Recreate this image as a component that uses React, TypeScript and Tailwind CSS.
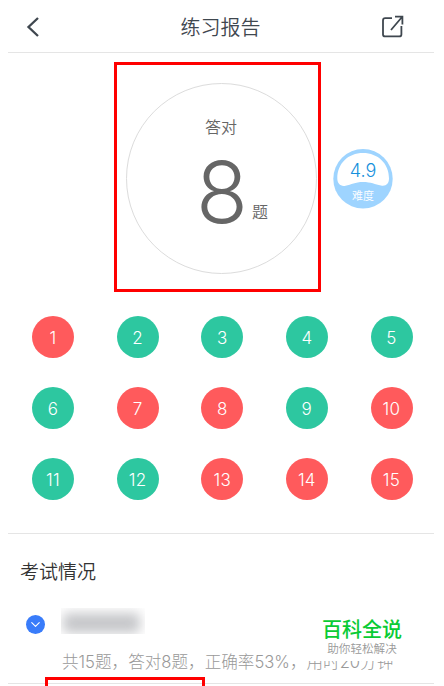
import { ChevronDown } from "lucide-react";
import clsx from "clsx";

const answers = [
  { id: 1, correct: false },
  { id: 2, correct: true },
  { id: 3, correct: true },
  { id: 4, correct: true },
  { id: 5, correct: true },
  { id: 6, correct: true },
  { id: 7, correct: false },
  { id: 8, correct: false },
  { id: 9, correct: true },
  { id: 10, correct: false },
  { id: 11, correct: true },
  { id: 12, correct: true },
  { id: 13, correct: false },
  { id: 14, correct: false },
  { id: 15, correct: false },
];

function Header() {
  return (
    <header className="flex h-[53px] items-center justify-between border-b border-[#e5e5e5] pt-[2px] pr-[30px] pl-[18px] text-[#3f474f]">
      <svg className="h-5 w-[13px]" viewBox="0 0 13 20" fill="none" stroke="currentColor" strokeWidth="2.3">
        <path d="M12 1 2.500 10l9.500 9" />
      </svg>
      <h1 className="ml-[21px] pt-px text-[20px] leading-6 font-[350]">练习报告</h1>
      <svg className="-mt-px h-[23px] w-[23px]" viewBox="0 0 23 23" fill="none" stroke="currentColor" strokeWidth="1.8">
        <path d="M11 3.2H4.2Q2 3.2 2 5.4v14Q2 21.4 4.2 21.4h14q2.2 0 2.2-2V11" />
        <path d="M14 1.6h7.4v8M21 2 10 15" />
      </svg>
    </header>
  );
}

function Difficulty() {
  return (
    <div className="relative mt-[87px] ml-3 h-[60px] w-[60px]">
      <svg className="h-full w-full" viewBox="0 0 60 60">
        <circle cx="30" cy="29.8" r="29.7" fill="#9ed4ff" />
        <path
          d="M4.3 29.5C4.3 14.5 15 4 30 4s26 10.500 26 25.500c0 5-3 8-8 7-6-1.200-10-3.600-18-3.600S18.500 35.500 12.500 36.700c-5 1-8.200-2.200-8.200-7.200Z"
          fill="#fff"
        />
      </svg>
      <div className="absolute inset-0 flex flex-col items-center">
        <span className="mt-[10px] text-[18px] leading-6 font-[350] text-[#1690dc]">4.9</span>
        <span className="mt-[5px] text-[11px] leading-4 font-[350] text-white">难度</span>
      </div>
    </div>
  );
}

function Score() {
  return (
    <section className="flex pt-[9px] pl-[106px]">
      <div className="h-[230px] w-[207px] border-3 border-[#ff0000] pt-[18px] pl-[9px]">
        <div className="flex h-[191px] w-[191px] flex-col items-center rounded-full border border-[#dcdcdc] pt-[31px] text-[#666]">
          <span className="pr-px text-[16px] leading-6 font-[350]">答对</span>
          <div className="mt-[10px] ml-[69px] flex items-end self-start">
            <span className="w-[49px] text-center text-[85px] leading-[88px] font-light">8</span>
            <span className="mb-[13px] ml-[7px] text-[16px] leading-6 font-[350]">题</span>
          </div>
        </div>
      </div>
      <Difficulty />
    </section>
  );
}

function AnswerGrid() {
  return (
    <section className="mt-6 ml-6 grid w-[380.5px] grid-cols-[repeat(5,42px)] justify-between gap-y-[29px]">
      {answers.map((a) => (
        <div
          key={a.id}
          className={clsx(
            "flex h-[42px] w-[42px] items-center justify-center rounded-full pt-[3px] text-[17px] tracking-[0.3px] font-light text-white",
            a.correct ? "bg-[#2dc7a0]" : "bg-[#ff5a5c]"
          )}
        >
          {a.id}
        </div>
      ))}
    </section>
  );
}

function ExamSummary() {
  return (
    <section className="mt-[33px] h-[151px] border-y border-[#e5e5e5] pl-3">
      <h2 className="pt-[27px] text-[19px] leading-6 font-[350] text-[#333]">考试情况</h2>
      <div className="mt-[23px] flex h-[26px] items-center pl-[5px]">
        <span className="mt-[7px] ml-px flex h-[19px] w-[19px] items-center justify-center rounded-full bg-[#397cfa] text-white">
          <ChevronDown className="h-[15px] w-[15px]" strokeWidth={1.8} />
        </span>
        {/* hidden exam name */}
        <div className="ml-4 h-[26px] w-[84px] overflow-hidden">
          <div className="mt-[5px] ml-[2px] h-5 w-[77px] rounded bg-[#c6c7ca] blur-[6px]" />
        </div>
      </div>
      <p className="mt-[16px] ml-[42px] text-[16.600px] leading-6 font-light whitespace-nowrap text-[#999]">
        共15题，答对8题，正确率53%，用时20分钟
      </p>
    </section>
  );
}

export default function App() {
  return (
    <div className="relative h-[686px] w-[444px] overflow-hidden bg-white font-['Inter','Noto_Sans_CJK_SC',sans-serif]">
      <main className="ml-2 w-[426px]">
        <Header />
        <Score />
        <AnswerGrid />
        <ExamSummary />
      </main>

      {/* highlight at the bottom edge */}
      <div className="absolute top-[677px] left-[45px] h-5 w-[160px] border-3 border-[#ff0000]" />

      {/* watermark */}
      <div className="absolute top-[612px] left-[307px] flex h-[49px] w-[110px] flex-col items-center bg-white">
        <span className="mt-[6px] text-[20px] leading-6 font-medium text-[#0acb35]">百科全说</span>
        <span className="-mt-px text-[11.600px] leading-4 font-[350] text-[#999]">助你轻松解决</span>
      </div>
    </div>
  );
}
